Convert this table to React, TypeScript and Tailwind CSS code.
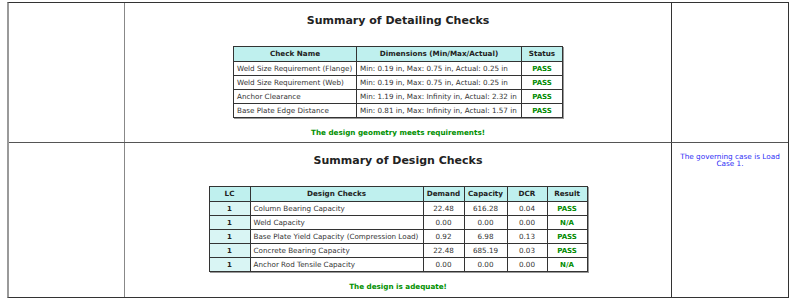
import React from "react";

const font = { fontFamily: '"DejaVu Sans", Verdana, sans-serif' };

const detailRows = [
  ["Weld Size Requirement (Flange)", "Min: 0.19 in, Max: 0.75 in, Actual: 0.25 in", "PASS"],
  ["Weld Size Requirement (Web)", "Min: 0.19 in, Max: 0.75 in, Actual: 0.25 in", "PASS"],
  ["Anchor Clearance", "Min: 1.19 in, Max: Infinity in, Actual: 2.32 in", "PASS"],
  ["Base Plate Edge Distance", "Min: 0.81 in, Max: Infinity in, Actual: 1.57 in", "PASS"],
];

const designRows = [
  ["1", "Column Bearing Capacity", "22.48", "616.28", "0.04", "PASS"],
  ["1", "Weld Capacity", "0.00", "0.00", "0.00", "N/A"],
  ["1", "Base Plate Yield Capacity (Compression Load)", "0.92", "6.98", "0.13", "PASS"],
  ["1", "Concrete Bearing Capacity", "22.48", "685.19", "0.03", "PASS"],
  ["1", "Anchor Rod Tensile Capacity", "0.00", "0.00", "0.00", "N/A"],
];

const th = "border border-[#333] bg-[#bff0ee] font-bold text-[#222] text-[7.2px] text-center px-[2px] h-[15px] leading-[8px]";
const cell = "border border-[#333] px-[3px] h-[14px] leading-[8px]";
const td = cell + " text-[7.2px] text-[#333]";
const tdPass = cell + " text-center font-bold text-[7px] text-[#008a00]";
const tdLc = cell + " text-center font-bold text-[7px] text-[#222] bg-[#d9f5f4]";

export default function App() {
  return (
    <div className="w-[800px] h-[308px] bg-white pt-[2px] pl-[7px]" style={font}>
      <div className="w-[782px] border-l-2 border-l-[#9a9a9a] border-t border-r border-b border-t-[#333] border-r-[#333] border-b-[#333]">
        {/* Row 1 */}
        <div className="grid grid-cols-[115px_546px_116px] gap-x-[1px] bg-[#333] border-b border-[#555]">
          <div className="bg-white h-[139px] border-r border-[#888] -mr-[1px]" />
          <div className="bg-white flex flex-col items-center pt-[11px]">
            <div className="text-[11px] leading-[13px] font-bold text-[#222]">Summary of Detailing Checks</div>
            <table className="mt-[19px] border-collapse shadow-[1px_1px_0_#999]">
              <thead>
                <tr>
                  <th className={th + " w-[123px]"}>Check Name</th>
                  <th className={th + " w-[165px]"}>Dimensions (Min/Max/Actual)</th>
                  <th className={th + " w-[41px]"}>Status</th>
                </tr>
              </thead>
              <tbody>
                {detailRows.map((r) => (
                  <tr key={r[0]}>
                    <td className={td + " whitespace-nowrap"}>{r[0]}</td>
                    <td className={td + " whitespace-nowrap"}>{r[1]}</td>
                    <td className={tdPass}>{r[2]}</td>
                  </tr>
                ))}
              </tbody>
            </table>
            <div className="mt-[10px] text-[7.2px] leading-[9px] font-bold text-[#009000]">
              The design geometry meets requirements!
            </div>
          </div>
          <div className="bg-white" />
        </div>
        {/* Row 2 */}
        <div className="grid grid-cols-[115px_546px_116px] gap-x-[1px] bg-[#333]">
          <div className="bg-white h-[154px] border-r border-[#888] -mr-[1px]" />
          <div className="bg-white flex flex-col items-center pt-[11px]">
            <div className="text-[11px] leading-[13px] font-bold text-[#222]">Summary of Design Checks</div>
            <table className="mt-[19px] border-collapse shadow-[1px_1px_0_#999]">
              <thead>
                <tr>
                  <th className={th + " w-[41px]"}>LC</th>
                  <th className={th + " w-[173px]"}>Design Checks</th>
                  <th className={th + " w-[41px]"}>Demand</th>
                  <th className={th + " w-[43px]"}>Capacity</th>
                  <th className={th + " w-[40px]"}>DCR</th>
                  <th className={th + " w-[40px]"}>Result</th>
                </tr>
              </thead>
              <tbody>
                {designRows.map((r) => (
                  <tr key={r[1]}>
                    <td className={tdLc}>{r[0]}</td>
                    <td className={td + " whitespace-nowrap"}>{r[1]}</td>
                    <td className={td + " text-center"}>{r[2]}</td>
                    <td className={td + " text-center"}>{r[3]}</td>
                    <td className={td + " text-center"}>{r[4]}</td>
                    <td className={tdPass}>{r[5]}</td>
                  </tr>
                ))}
              </tbody>
            </table>
            <div className="mt-[10px] text-[7.2px] leading-[9px] font-bold text-[#009000]">
              The design is adequate!
            </div>
          </div>
          <div className="bg-white pt-[10px] px-[6px] text-center text-[7.3px] leading-[7px] text-[#2f2ff5]">
            The governing case is Load Case 1.
          </div>
        </div>
      </div>
    </div>
  );
}
